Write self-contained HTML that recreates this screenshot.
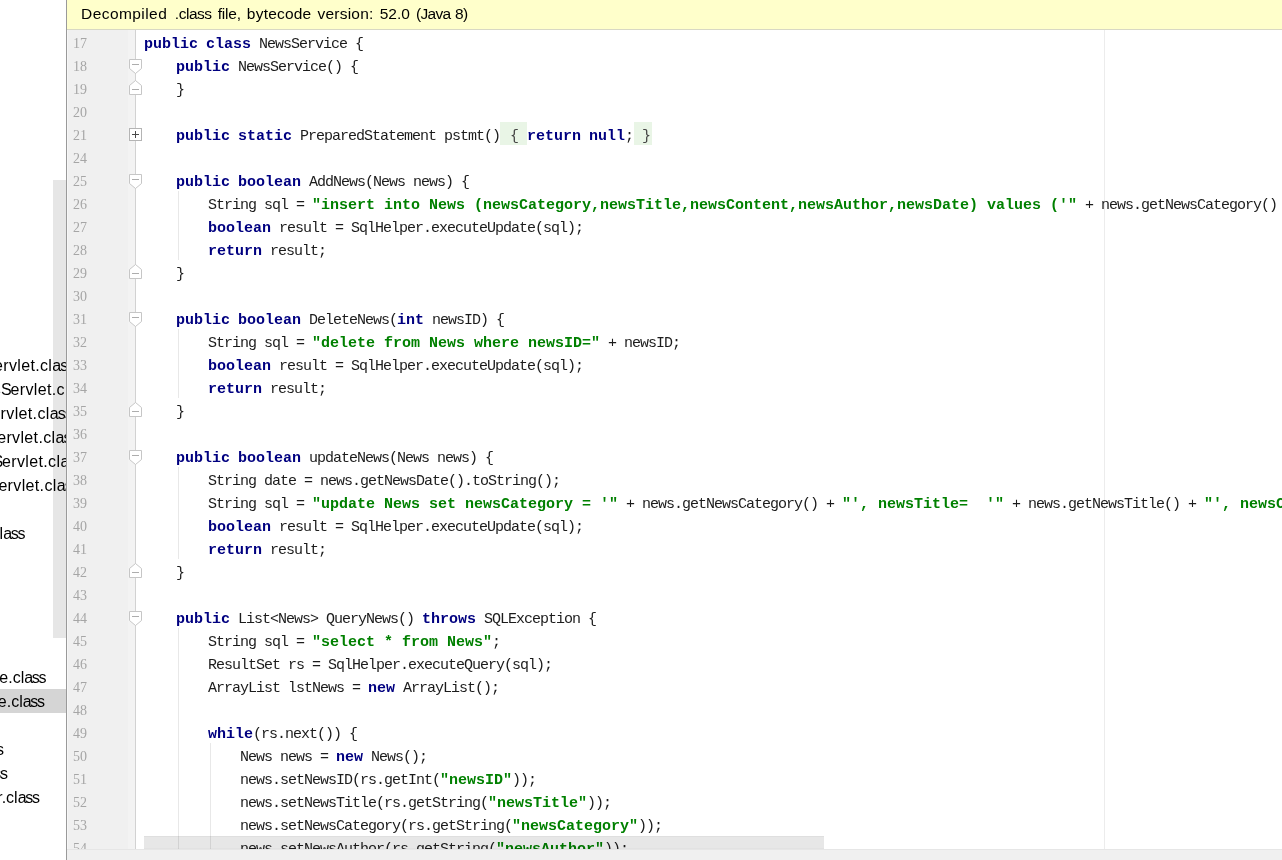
<!DOCTYPE html>
<html><head><meta charset="utf-8"><title>NewsService.class</title>
<style>
html,body{margin:0;padding:0}
body{width:1282px;height:860px;overflow:hidden;position:relative;background:#fff;font-family:"Liberation Sans",sans-serif}
#left{position:absolute;left:0;top:0;width:66px;height:860px;overflow:hidden;will-change:transform}
#left .sb{position:absolute;left:53px;top:180px;width:13px;height:458px;background:#e6e6e6}
#left .sel{position:absolute;left:0;top:689px;width:66px;height:24px;background:#d5d5d5}
#left .it{position:absolute;white-space:nowrap;font-size:16px;line-height:24px;height:24px;color:#000;margin-top:1px}
#left .t{letter-spacing:0.35px}
#left .t .S{letter-spacing:-1.2px}
#left .c{letter-spacing:-1.3px}
#left .t .c{letter-spacing:-0.9px}
#vb{position:absolute;left:66px;top:0;width:1px;height:860px;background:#9a9a9a}
#banner{position:absolute;left:67px;top:0;width:1215px;height:29px;background:#ffffcb;border-bottom:1px solid #d8d8c4;box-sizing:content-box}
#banner i{font-style:normal}
#banner span{will-change:transform;position:absolute;left:14.2px;top:0;line-height:28px;font-size:15.5px;word-spacing:1.8px;color:#000;white-space:nowrap}
#gutter{position:absolute;left:67px;top:30px;width:68px;height:830px;background:#f0f0f0;box-sizing:border-box;border-left:1px solid #f7f7f7;border-right:7px solid #f3f3f3}
#foldline{position:absolute;left:135px;top:30px;width:1px;height:830px;background:#d2d2d2}
.ln{will-change:transform;position:absolute;left:72.5px;height:23px;line-height:28px;font-family:"Liberation Serif",serif;font-size:14px;color:#a6a6a6;white-space:pre}
#code{position:absolute;left:0;top:0;width:1282px;height:860px;overflow:hidden;will-change:transform}
.cl{position:absolute;height:23px;line-height:30px;font-family:"Liberation Mono",monospace;font-size:15px;letter-spacing:-1.0015px;color:#1c1c1c;white-space:pre}
.k{color:#000080;font-weight:bold;letter-spacing:-0.0015px}
.s{color:#008000;font-weight:bold;letter-spacing:-0.0015px}
.f{color:#444;padding:0 1px 0 2px}
.f2{color:#444;padding:0 2px 0 0;margin-left:1px}
.fb{position:absolute;height:23px;background:#e9f5e6}
.ig{position:absolute;width:1px;background:#e8e8e8}
#margin{position:absolute;left:1104px;top:30px;width:1px;height:819px;background:#ececec}
#hthumb{position:absolute;left:144px;top:836px;width:680px;height:13px;background:rgba(0,0,0,0.094);box-sizing:border-box;border-top:1px solid rgba(0,0,0,0.03);border-bottom:1px solid rgba(0,0,0,0.02)}
#bottom{position:absolute;left:67px;top:849px;width:1215px;height:11px;background:#f0f0f0;box-sizing:border-box;border-top:1px solid #e6e6e6}
</style></head><body>
<div id="left">
<div class="sb"></div>
<div class="sel"></div>
<div class="it t" style="left:-6.03px;top:353px">ervlet.cl<span class="c">ass</span></div>
<div class="it t" style="left:-7.25px;top:377px">s<span class="S">S</span>ervlet.cl<span class="c">ass</span></div>
<div class="it t" style="left:-8.63px;top:401px">ervlet.cl<span class="c">ass</span></div>
<div class="it t" style="left:-2.83px;top:425px">ervlet.cl<span class="c">ass</span></div>
<div class="it t" style="left:-7.4px;top:449px"><span class="S">S</span>ervlet.cl<span class="c">ass</span></div>
<div class="it t" style="left:-1.63px;top:473px">ervlet.cl<span class="c">ass</span></div>
<div class="it" style="left:-8.4px;top:521px">cl<span class="c">ass</span></div>
<div class="it" style="left:-0.7px;top:665px">e.cl<span class="c">ass</span></div>
<div class="it" style="left:-2.2px;top:689px">e.cl<span class="c">ass</span></div>
<div class="it" style="left:-29.95px;top:737px">cl<span class="c">ass</span></div>
<div class="it" style="left:-25.85px;top:761px">cl<span class="c">ass</span></div>
<div class="it" style="left:-2.8px;top:785px">r.cl<span class="c">ass</span></div>
</div>
<div id="vb"></div>
<div id="banner"><span><i style="letter-spacing:0.44px;margin-right:1.5px">Decompiled</i> <i style="letter-spacing:-0.48px">.class</i> <i style="letter-spacing:-0.22px">file,</i> <i style="letter-spacing:0.21px">bytecode</i> <i style="letter-spacing:0.21px">version:</i> <i style="letter-spacing:0.05px">52.0</i> <i style="letter-spacing:-0.74px;margin-right:-1.5px">(Java</i> <i style="letter-spacing:-0.55px">8)</i></span></div>
<div id="gutter"></div>
<div id="foldline"></div>
<div id="code">
<div id="margin"></div>
<div class="fb" style="left:500px;top:122px;width:27px"></div><div class="fb" style="left:634px;top:122px;width:18px"></div>
<div class="ln" style="top:30px">17</div>
<div class="ln" style="top:53px">18</div>
<div class="ln" style="top:76px">19</div>
<div class="ln" style="top:99px">20</div>
<div class="ln" style="top:122px">21</div>
<div class="ln" style="top:145px">24</div>
<div class="ln" style="top:168px">25</div>
<div class="ln" style="top:191px">26</div>
<div class="ln" style="top:214px">27</div>
<div class="ln" style="top:237px">28</div>
<div class="ln" style="top:260px">29</div>
<div class="ln" style="top:283px">30</div>
<div class="ln" style="top:306px">31</div>
<div class="ln" style="top:329px">32</div>
<div class="ln" style="top:352px">33</div>
<div class="ln" style="top:375px">34</div>
<div class="ln" style="top:398px">35</div>
<div class="ln" style="top:421px">36</div>
<div class="ln" style="top:444px">37</div>
<div class="ln" style="top:467px">38</div>
<div class="ln" style="top:490px">39</div>
<div class="ln" style="top:513px">40</div>
<div class="ln" style="top:536px">41</div>
<div class="ln" style="top:559px">42</div>
<div class="ln" style="top:582px">43</div>
<div class="ln" style="top:605px">44</div>
<div class="ln" style="top:628px">45</div>
<div class="ln" style="top:651px">46</div>
<div class="ln" style="top:674px">47</div>
<div class="ln" style="top:697px">48</div>
<div class="ln" style="top:720px">49</div>
<div class="ln" style="top:743px">50</div>
<div class="ln" style="top:766px">51</div>
<div class="ln" style="top:789px">52</div>
<div class="ln" style="top:812px">53</div>
<div class="ln" style="top:835px">54</div>
<div class="cl" style="top:30px;left:144px"><span class="k">public</span> <span class="k">class</span> NewsService {</div>
<div class="cl" style="top:53px;left:176px"><span class="k">public</span> NewsService() {</div>
<div class="cl" style="top:76px;left:176px">}</div>
<div class="cl" style="top:122px;left:176px"><span class="k">public</span> <span class="k">static</span> PreparedStatement pstmt()<span class="f"> { </span><span class="k">return</span> <span class="k">null</span>;<span class="f2"> }</span></div>
<div class="cl" style="top:168px;left:176px"><span class="k">public</span> <span class="k">boolean</span> AddNews(News news) {</div>
<div class="cl" style="top:191px;left:208px">String sql = <span class="s">"insert into News (newsCategory,newsTitle,newsContent,newsAuthor,newsDate) values ('"</span> + news.getNewsCategory() + </div>
<div class="cl" style="top:214px;left:208px"><span class="k">boolean</span> result = SqlHelper.executeUpdate(sql);</div>
<div class="cl" style="top:237px;left:208px"><span class="k">return</span> result;</div>
<div class="cl" style="top:260px;left:176px">}</div>
<div class="cl" style="top:306px;left:176px"><span class="k">public</span> <span class="k">boolean</span> DeleteNews(<span class="k">int</span> newsID) {</div>
<div class="cl" style="top:329px;left:208px">String sql = <span class="s">"delete from News where newsID="</span> + newsID;</div>
<div class="cl" style="top:352px;left:208px"><span class="k">boolean</span> result = SqlHelper.executeUpdate(sql);</div>
<div class="cl" style="top:375px;left:208px"><span class="k">return</span> result;</div>
<div class="cl" style="top:398px;left:176px">}</div>
<div class="cl" style="top:444px;left:176px"><span class="k">public</span> <span class="k">boolean</span> updateNews(News news) {</div>
<div class="cl" style="top:467px;left:208px">String date = news.getNewsDate().toString();</div>
<div class="cl" style="top:490px;left:208px">String sql = <span class="s">"update News set newsCategory = '"</span> + news.getNewsCategory() + <span class="s">"', newsTitle=  '"</span> + news.getNewsTitle() + <span class="s">"', newsContent = '"</span></div>
<div class="cl" style="top:513px;left:208px"><span class="k">boolean</span> result = SqlHelper.executeUpdate(sql);</div>
<div class="cl" style="top:536px;left:208px"><span class="k">return</span> result;</div>
<div class="cl" style="top:559px;left:176px">}</div>
<div class="cl" style="top:605px;left:176px"><span class="k">public</span> List&lt;News&gt; QueryNews() <span class="k">throws</span> SQLException {</div>
<div class="cl" style="top:628px;left:208px">String sql = <span class="s">"select * from News"</span>;</div>
<div class="cl" style="top:651px;left:208px">ResultSet rs = SqlHelper.executeQuery(sql);</div>
<div class="cl" style="top:674px;left:208px">ArrayList lstNews = <span class="k">new</span> ArrayList();</div>
<div class="cl" style="top:720px;left:208px"><span class="k">while</span>(rs.next()) {</div>
<div class="cl" style="top:743px;left:240px">News news = <span class="k">new</span> News();</div>
<div class="cl" style="top:766px;left:240px">news.setNewsID(rs.getInt(<span class="s">"newsID"</span>));</div>
<div class="cl" style="top:789px;left:240px">news.setNewsTitle(rs.getString(<span class="s">"newsTitle"</span>));</div>
<div class="cl" style="top:812px;left:240px">news.setNewsCategory(rs.getString(<span class="s">"newsCategory"</span>));</div>
<div class="cl" style="top:835px;left:240px">news.setNewsAuthor(rs.getString(<span class="s">"newsAuthor"</span>));</div>
<div class="ig" style="left:178px;top:191px;height:69px"></div>
<div class="ig" style="left:178px;top:329px;height:69px"></div>
<div class="ig" style="left:178px;top:467px;height:92px"></div>
<div class="ig" style="left:178px;top:628px;height:232px"></div>
<div class="ig" style="left:210px;top:743px;height:117px"></div>
<svg id="folds" width="160" height="860" viewBox="0 0 160 860" style="position:absolute;left:0;top:0">
<path d="M129.5 59.5H141.5V68.5L135.5 73.5L129.5 68.5Z" fill="#fff" stroke="#c6c6c6"/><path d="M132 64.5H139" stroke="#adadad"/>
<path d="M135.5 80.5L141.5 85.5V94.5H129.5V85.5Z" fill="#fff" stroke="#c6c6c6"/><path d="M132 89.5H139" stroke="#adadad"/>
<path d="M129.5 174.5H141.5V183.5L135.5 188.5L129.5 183.5Z" fill="#fff" stroke="#c6c6c6"/><path d="M132 179.5H139" stroke="#adadad"/>
<path d="M135.5 264.5L141.5 269.5V278.5H129.5V269.5Z" fill="#fff" stroke="#c6c6c6"/><path d="M132 273.5H139" stroke="#adadad"/>
<path d="M129.5 312.5H141.5V321.5L135.5 326.5L129.5 321.5Z" fill="#fff" stroke="#c6c6c6"/><path d="M132 317.5H139" stroke="#adadad"/>
<path d="M135.5 402.5L141.5 407.5V416.5H129.5V407.5Z" fill="#fff" stroke="#c6c6c6"/><path d="M132 411.5H139" stroke="#adadad"/>
<path d="M129.5 450.5H141.5V459.5L135.5 464.5L129.5 459.5Z" fill="#fff" stroke="#c6c6c6"/><path d="M132 455.5H139" stroke="#adadad"/>
<path d="M135.5 563.5L141.5 568.5V577.5H129.5V568.5Z" fill="#fff" stroke="#c6c6c6"/><path d="M132 572.5H139" stroke="#adadad"/>
<rect x="129.5" y="128.5" width="12" height="12" fill="#fff" stroke="#b4b4b4"/><path d="M132 134.5H139M135.5 131V138" stroke="#4a4a4a"/>
<path d="M129.5 611.5H141.5V620.5L135.5 625.5L129.5 620.5Z" fill="#fff" stroke="#c6c6c6"/><path d="M132 616.5H139" stroke="#adadad"/>
</svg>
</div>
<div id="hthumb"></div>
<div id="bottom"></div>
</body></html>
